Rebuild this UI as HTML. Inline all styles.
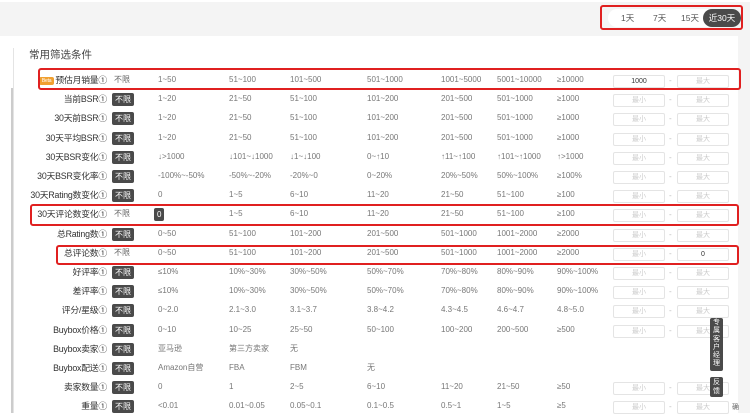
<!DOCTYPE html>
<html><head><meta charset="utf-8"><style>
*{margin:0;padding:0;box-sizing:border-box}
body{width:750px;height:413px;overflow:hidden;background:#fff;font-family:"Liberation Sans","Noto Sans CJK SC",sans-serif;color:#444;position:relative}
.a{position:absolute;white-space:nowrap;line-height:12px}
.top{left:0;top:2px;width:750px;height:34px;background:#f4f4f4}
.rs{left:738px;top:36px;width:12px;height:377px;background:#f4f4f4}
.lab{font-size:8.8px;color:#333;text-align:right;left:0;letter-spacing:-0.2px}
.bx{font-size:8px;color:#fff;background:#4a4a4a;border-radius:2px;padding:0 3px;line-height:13px;height:13px}
.nb{font-size:8px;color:#666}
.v{font-size:8px;color:#777}
.in{width:52px;height:13px;border:1px solid #e4e4e4;border-radius:2px;font-size:7px;color:#ccc;text-align:center;line-height:11px;background:#fff}
.dash{font-size:8px;color:#bbb}
.red{border:2px solid #e02020;border-radius:3px}
</style></head><body>
<div class="a top"></div>
<div class="a rs"></div>
<div class="a" style="left:13px;top:48px;width:1px;height:365px;background:#e4e4e4"></div>
<div class="a" style="left:11px;top:88px;width:2px;height:325px;background:#ccc"></div>
<div class="a" style="left:29px;top:49px;font-size:10.5px;color:#444">常用筛选条件</div>
<div class="a" style="left:608px;top:9px;width:133px;height:18px;background:#fff;border-radius:9px"></div>
<div class="a" style="left:621px;top:12px;font-size:8.5px;color:#555">1天</div>
<div class="a" style="left:653px;top:12px;font-size:8.5px;color:#555">7天</div>
<div class="a" style="left:681px;top:12px;font-size:8.5px;color:#555">15天</div>
<div class="a" style="left:703px;top:9px;width:38px;height:18px;background:#4a4a4a;border-radius:9px;color:#fff;font-size:8.5px;text-align:center;line-height:18px">近30天</div>
<div class="a red" style="left:600px;top:5px;width:143px;height:25px"></div>
<div id="rows"></div>
<div class="a" style="left:710px;top:318px;width:13px;height:53px;background:#4a4a4a;border-radius:2px;color:#fff;font-size:7px;line-height:8.3px;text-align:center;padding-top:1px;white-space:normal">专属客户经理</div>
<div class="a" style="left:710px;top:377px;width:13px;height:20px;background:#4a4a4a;border-radius:2px;color:#fff;font-size:7px;line-height:9px;text-align:center;padding-top:1px;white-space:normal">反馈</div>
<div class="a" style="left:732px;top:402px;font-size:7px;color:#666">确</div>
<div class="a red" style="left:38px;top:68px;width:703px;height:22px"></div>
<div class="a red" style="left:30px;top:204px;width:709px;height:22px"></div>
<div class="a red" style="left:56px;top:245px;width:683px;height:20px"></div>
<script>
var R=[
["预估月销量①",0,["1~50","51~100","101~500","501~1000","1001~5000","5001~10000","≥10000"],"1000","最大"],
["当前BSR①",1,["1~20","21~50","51~100","101~200","201~500","501~1000","≥1000"]],
["30天前BSR①",1,["1~20","21~50","51~100","101~200","201~500","501~1000","≥1000"]],
["30天平均BSR①",1,["1~20","21~50","51~100","101~200","201~500","501~1000","≥1000"]],
["30天BSR变化①",1,["↓>1000","↓101~↓1000","↓1~↓100","0~↑10","↑11~↑100","↑101~↑1000","↑>1000"]],
["30天BSR变化率①",1,["-100%~-50%","-50%~-20%","-20%~0","0~20%","20%~50%","50%~100%","≥100%"]],
["30天Rating数变化①",1,["0","1~5","6~10","11~20","21~50","51~100","≥100"]],
["30天评论数变化①",0,["0","1~5","6~10","11~20","21~50","51~100","≥100"]],
["总Rating数①",1,["0~50","51~100","101~200","201~500","501~1000","1001~2000","≥2000"]],
["总评论数①",0,["0~50","51~100","101~200","201~500","501~1000","1001~2000","≥2000"],"最小","0"],
["好评率①",1,["≤10%","10%~30%","30%~50%","50%~70%","70%~80%","80%~90%","90%~100%"]],
["差评率①",1,["≤10%","10%~30%","30%~50%","50%~70%","70%~80%","80%~90%","90%~100%"]],
["评分/星级①",1,["0~2.0","2.1~3.0","3.1~3.7","3.8~4.2","4.3~4.5","4.6~4.7","4.8~5.0"]],
["Buybox价格①",1,["0~10","10~25","25~50","50~100","100~200","200~500","≥500"]],
["Buybox卖家①",1,["亚马逊","第三方卖家","无"],null],
["Buybox配送①",1,["Amazon自营","FBA","FBM","无"],null],
["卖家数量①",1,["0","1","2~5","6~10","11~20","21~50","≥50"]],
["重量①",1,["<0.01","0.01~0.05","0.05~0.1","0.1~0.5","0.5~1","1~5","≥5"]]];
var X=[158,229,290,367,441,497,557],h="";
R.forEach(function(r,i){var y=Math.round(74+i*19.2);
var lab=r[0];
h+='<div class="a lab" style="top:'+y+'px;width:107px">'+(i==0?'<span style="display:inline-block;background:#f0a030;color:#fff;font-size:5px;padding:0 3px;border-radius:2px;line-height:8px;vertical-align:middle;margin-right:1px">Beta</span>':'')+lab+'</div>';
h+='<div class="a '+(r[1]?'bx':'nb')+'" style="left:'+(r[1]?112:114)+'px;top:'+(y-0.5)+'px">不限</div>';
r[2].forEach(function(v,j){var st=(i==7&&j==0)?'class="a bx" style="left:154px;top:'+(y)+'px;padding:0 3px"':'class="a v" style="left:'+X[j]+'px;top:'+(y)+'px"';h+='<div '+st+'>'+v+'</div>';});
if(r[3]!==null){var mn=r[3]||"最小",mx=r[4]||"最大";
h+='<div class="a in" style="left:613px;top:'+(y+1)+'px;'+(mn!="最小"?'color:#333':'')+'">'+mn+'</div><div class="a dash" style="left:669px;top:'+(y+1)+'px">-</div><div class="a in" style="left:677px;top:'+(y+1)+'px;'+(mx!="最大"?'color:#333':'')+'">'+mx+'</div>';}
});
document.getElementById('rows').innerHTML=h;
</script>
</body></html>
